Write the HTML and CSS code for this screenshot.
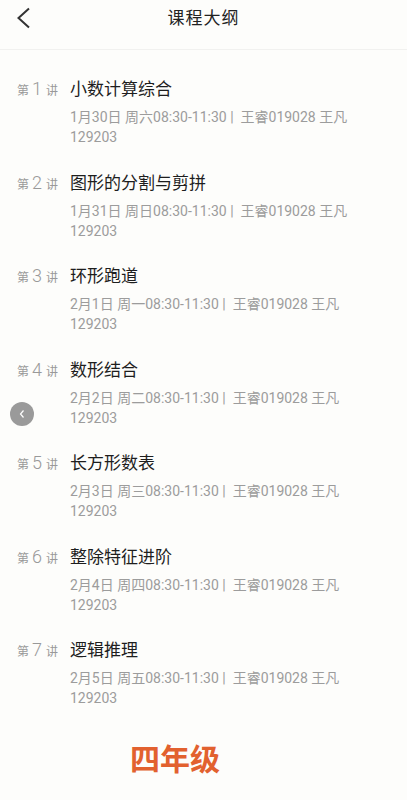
FILE: index.html
```html
<!DOCTYPE html>
<html lang="zh-CN">
<head>
<meta charset="utf-8">
<title>课程大纲</title>
<link rel="stylesheet" href="styles.css">
</head>
<body>
<div class="page">
  <header class="header">
    <span class="back">
      <svg width="16" height="22" viewBox="0 0 16 22"><path d="M13 1.5 L2.5 11 L13 20.5" fill="none" stroke="#333" stroke-width="2"/></svg>
    </span>
    <h1 class="title">课程大纲</h1>
  </header>
  <ul class="list">
    <li class="item"><div class="label"><span class="di">第</span><span class="num">1</span><span class="jiang">讲</span></div><div class="body"><div class="name">小数计算综合</div><div class="meta">1月30日 周六08:30-11:30 |&nbsp; 王睿019028 王凡 129203</div></div></li>
    <li class="item"><div class="label"><span class="di">第</span><span class="num">2</span><span class="jiang">讲</span></div><div class="body"><div class="name">图形的分割与剪拼</div><div class="meta">1月31日 周日08:30-11:30 |&nbsp; 王睿019028 王凡 129203</div></div></li>
    <li class="item"><div class="label"><span class="di">第</span><span class="num">3</span><span class="jiang">讲</span></div><div class="body"><div class="name">环形跑道</div><div class="meta">2月1日 周一08:30-11:30 |&nbsp; 王睿019028 王凡 129203</div></div></li>
    <li class="item"><div class="label"><span class="di">第</span><span class="num">4</span><span class="jiang">讲</span></div><div class="body"><div class="name">数形结合</div><div class="meta">2月2日 周二08:30-11:30 |&nbsp; 王睿019028 王凡 129203</div></div></li>
    <li class="item"><div class="label"><span class="di">第</span><span class="num">5</span><span class="jiang">讲</span></div><div class="body"><div class="name">长方形数表</div><div class="meta">2月3日 周三08:30-11:30 |&nbsp; 王睿019028 王凡 129203</div></div></li>
    <li class="item"><div class="label"><span class="di">第</span><span class="num">6</span><span class="jiang">讲</span></div><div class="body"><div class="name">整除特征进阶</div><div class="meta">2月4日 周四08:30-11:30 |&nbsp; 王睿019028 王凡 129203</div></div></li>
    <li class="item"><div class="label"><span class="di">第</span><span class="num">7</span><span class="jiang">讲</span></div><div class="body"><div class="name">逻辑推理</div><div class="meta">2月5日 周五08:30-11:30 |&nbsp; 王睿019028 王凡 129203</div></div></li>
  </ul>
  <div class="grade">四年级</div>
  <div class="float-back">
    <svg width="8" height="10" viewBox="0 0 8 10"><path d="M5.5 1.5 L2.5 5 L5.5 8.5" fill="none" stroke="#fff" stroke-width="1.2"/></svg>
  </div>
</div>
</body>
</html>
```
FILE: styles.css
```css
* { box-sizing: border-box; }
html, body { margin: 0; padding: 0; }
body {
  background: #fdfdfb;
  font-family: "Roboto", "Noto Sans CJK SC", sans-serif;
  width: 407px;
  height: 800px;
  overflow: hidden;
}
.page { position: relative; height: 800px; }
.header {
  height: 50px;
  position: relative;
  display: flex;
  align-items: flex-start;
  justify-content: center;
  border-bottom: 1px solid #f1f1ef;
}
.back {
  position: absolute;
  left: 16px;
  top: 7px;
  display: flex;
}
.title {
  margin: 0;
  padding-top: 6px;
  font-size: 17px;
  line-height: 24px;
  font-weight: 400;
  color: #222;
  letter-spacing: 1px;
}
.list {
  list-style: none;
  margin: 0;
  padding: 27px 30px 0 17px;
  display: flex;
  flex-direction: column;
  gap: 23.5px;
}
.item {
  display: flex;
  align-items: flex-start;
}
.label {
  width: 53px;
  flex: none;
  height: 24px;
  display: flex;
  align-items: baseline;
  color: #999;
  padding-top: 2px;
}
.di, .jiang { font-size: 12px; }
.num { font-size: 18px; font-weight: 300; margin: 0 4px 0 3px; line-height: 20px; }
.body { flex: 1; }
.name {
  font-size: 17px;
  line-height: 24px;
  color: #1e1e1e;
  margin-bottom: 6px;
}
.meta {
  font-size: 14px;
  line-height: 20px;
  color: #9c9c9c;
}
.grade {
  margin-top: 32px;
  padding-left: 130px;
  font-size: 30px;
  font-weight: 700;
  color: #e2612f;
  line-height: 40px;
}
.float-back {
  position: absolute;
  left: 10px;
  top: 402px;
  width: 24px;
  height: 24px;
  border-radius: 50%;
  background: #9a9a9a;
  display: flex;
  align-items: center;
  justify-content: center;
}
```
